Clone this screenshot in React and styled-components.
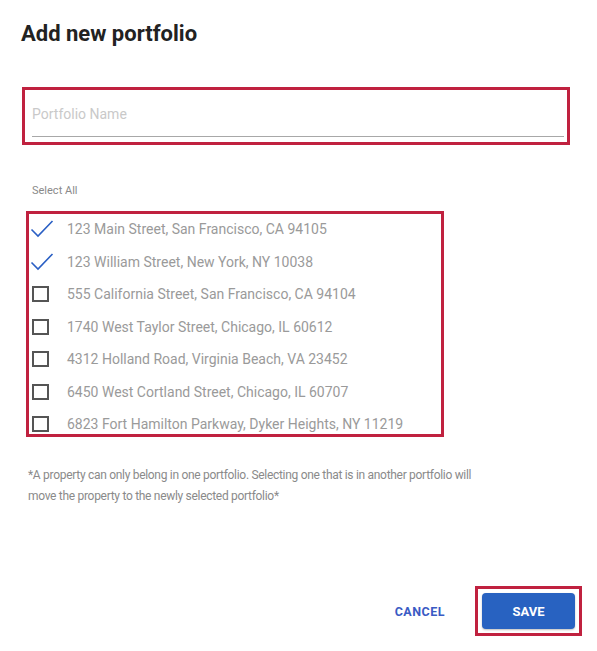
import React, { useState } from 'react';
import styled, { createGlobalStyle } from 'styled-components';

const properties = [
  '123 Main Street, San Francisco, CA 94105',
  '123 William Street, New York, NY 10038',
  '555 California Street, San Francisco, CA 94104',
  '1740 West Taylor Street, Chicago, IL 60612',
  '4312 Holland Road, Virginia Beach, VA 23452',
  '6450 West Cortland Street, Chicago, IL 60707',
  '6823 Fort Hamilton Parkway, Dyker Heights, NY 11219',
];

export default function App () {
  const [checked, setChecked] = useState([true, true, false, false, false, false, false]);

  const toggle = (i) => setChecked(checked.map((c, j) => (j === i ? !c : c)));

  return (
    <Page>
      <GlobalStyle />
      <Title>Add new portfolio</Title>

      <Highlight>
        <NameInput placeholder="Portfolio Name" />
      </Highlight>

      <SelectAll>Select All</SelectAll>

      <ListFrame>
        {properties.map((address, i) => (
          <Row key={address} onClick={() => toggle(i)}>
            <Box>
              {checked[i] ? (
                <svg width="24" height="20" viewBox="0 0 24 20">
                  <path d="M1.5 10.5 L8 17 L22.5 2" fill="none" stroke="#2a5fc4" strokeWidth="1.6" />
                </svg>
              ) : <Square />}
            </Box>
            <Address>{address}</Address>
          </Row>
        ))}
      </ListFrame>

      <Note>
        *A property can only belong in one portfolio. Selecting one that is in another portfolio will
        move the property to the newly selected portfolio*
      </Note>

      <Footer>
        <CancelButton>CANCEL</CancelButton>
        <SaveFrame>
          <SaveButton>SAVE</SaveButton>
        </SaveFrame>
      </Footer>
    </Page>
  );
}

const GlobalStyle = createGlobalStyle`
  body {
    margin: 0;
    background: #fff;
    font-family: Roboto, "Liberation Sans", sans-serif;
  }
`;

const Page = styled.div`
  width: 597px;
  height: 651px;
  box-sizing: border-box;
  padding: 18px 15px 0 21px;
`;

const Title = styled.h1`
  margin: 0;
  font-size: 22px;
  line-height: 32px;
  font-weight: 700;
  color: #222;
`;

const Highlight = styled.div`
  margin: 37px 0 0 1px;
  width: 548px;
  height: 58px;
  box-sizing: border-box;
  border: 3px solid #c0213f;
  padding: 0 3px 0 7px;
`;

const NameInput = styled.input`
  display: block;
  width: 100%;
  height: 47px;
  box-sizing: border-box;
  border: none;
  border-bottom: 1px solid #a8a8a8;
  padding: 2px 0 0;
  font-family: inherit;
  font-size: 14px;
  color: #444;
  outline: none;
  &::placeholder {
    color: #c9c9c9;
  }
`;

const SelectAll = styled.div`
  margin: 38px 0 0 11px;
  font-size: 11px;
  line-height: 16px;
  color: #8a8a8a;
`;

const ListFrame = styled.div`
  margin: 12px 0 0 5px;
  width: 418px;
  height: 226px;
  box-sizing: border-box;
  border: 3px solid #c0213f;
`;

const Row = styled.div`
  display: flex;
  align-items: center;
  height: 32.5px;
  cursor: pointer;
  &:first-child {
    margin-top: -1px;
  }
`;

const Box = styled.div`
  width: 37px;
  display: flex;
  align-items: center;
  padding-left: 1px;
`;

const Square = styled.span`
  display: block;
  width: 17px;
  height: 16px;
  margin-left: 2px;
  box-sizing: border-box;
  border: 2px solid #555;
`;

const Address = styled.span`
  font-size: 14px;
  color: #9a9a9a;
`;

const Note = styled.p`
  margin: 28px 0 0 7px;
  width: 445px;
  font-size: 12px;
  letter-spacing: -0.3px;
  line-height: 21px;
  color: #8a8a8a;
`;

const Footer = styled.div`
  display: flex;
  justify-content: flex-end;
  align-items: center;
  margin-top: 79px;
  gap: 30px;
`;

const CancelButton = styled.button`
  border: none;
  background: none;
  padding: 0;
  font-family: inherit;
  font-size: 12.5px;
  font-weight: 700;
  letter-spacing: 0.5px;
  color: #3a5bc4;
  cursor: pointer;
`;

const SaveFrame = styled.div`
  border: 3px solid #c0213f;
  padding: 4px;
`;

const SaveButton = styled.button`
  display: block;
  width: 93px;
  height: 36px;
  border: none;
  border-radius: 4px;
  background: #2862c1;
  color: #fff;
  font-family: inherit;
  font-size: 13px;
  font-weight: 700;
  box-shadow: 0 1px 2px rgba(0, 0, 0, 0.25);
  cursor: pointer;
`;
